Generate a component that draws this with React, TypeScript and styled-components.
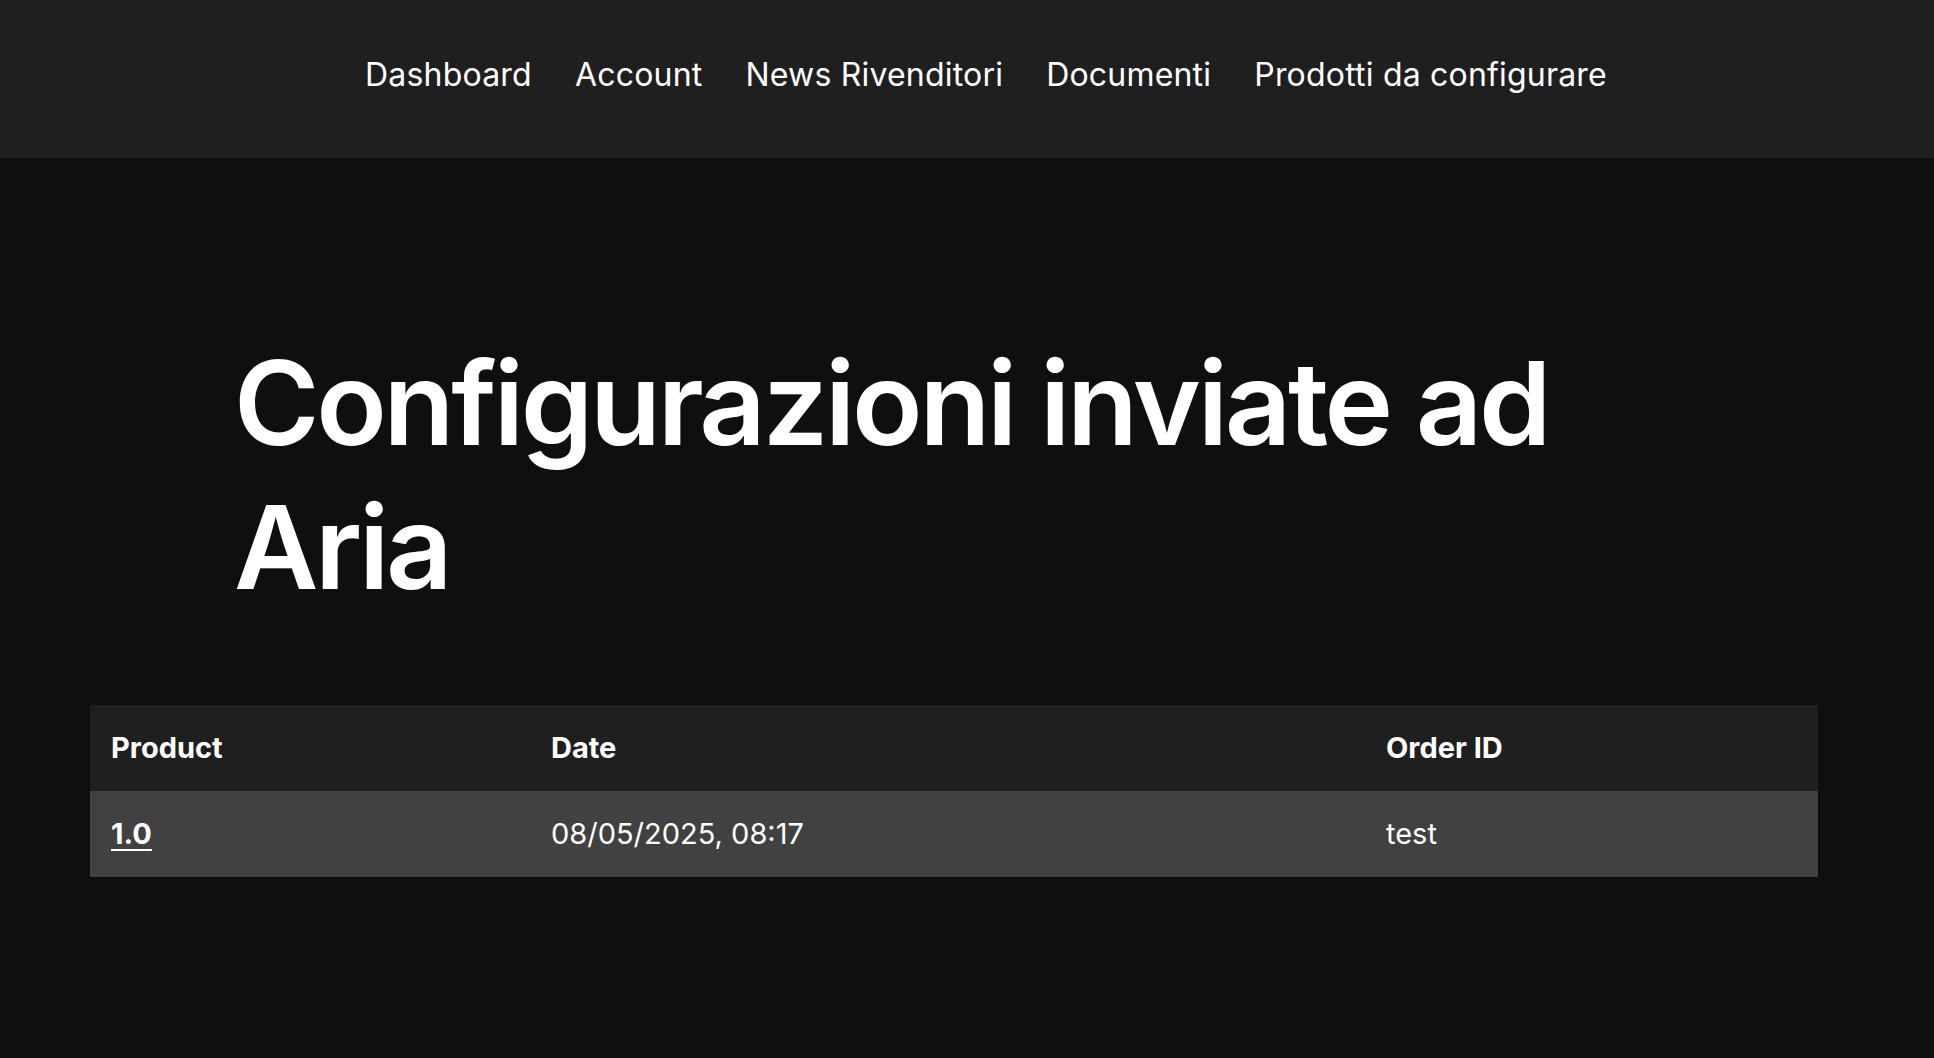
import React from 'react';
import styled, { createGlobalStyle } from 'styled-components';

const GlobalStyle = createGlobalStyle`
  html, body {
    margin: 0;
    padding: 0;
    background: #0f0f11;
    color: #ffffff;
    font-family: Inter, 'Noto Sans', sans-serif;
  }
`;

const Page = styled.div`
  min-height: 100vh;
  background: #0f0f11;
`;

const Header = styled.header`
  height: 158px;
  background: #1f1f1f;
  display: flex;
  align-items: center;
  justify-content: center;
  padding-left: 38px;
  padding-bottom: 10px;
  box-sizing: border-box;
`;

const Nav = styled.nav`
  display: flex;
  gap: 43px;
`;

const NavLink = styled.a`
  color: #ffffff;
  text-decoration: none;
  font-size: 32px;
  font-weight: 400;
  letter-spacing: 0.2px;
  cursor: pointer;
`;

const Main = styled.main`
  padding: 173px 116px 0 90px;
`;

const Title = styled.h1`
  margin: 0 0 86px 144px;
  font-size: 116px;
  line-height: 144px;
  font-weight: 600;
  letter-spacing: -3.3px;
  max-width: 1400px;
`;

const Table = styled.table`
  width: 100%;
  border-collapse: collapse;
  font-size: 29px;
`;

const HeadCell = styled.th<{ $width?: string }>`
  background: #1f1f1f;
  text-align: left;
  font-weight: 700;
  padding: 22px 21px;
  line-height: 42px;
  width: ${(p) => p.$width || 'auto'};
`;

const Row = styled.tr`
  background: #414141;
`;

const Cell = styled.td`
  padding: 22px 21px;
  line-height: 42px;
  font-weight: 400;
`;

const ProductLink = styled.a`
  color: #ffffff;
  font-weight: 700;
  text-decoration: underline;
  text-underline-offset: 5px;
  text-decoration-thickness: 2px;
`;

const links = ['Dashboard', 'Account', 'News Rivenditori', 'Documenti', 'Prodotti da configurare'];

const orders = [{ product: '1.0', date: '08/05/2025, 08:17', orderId: 'test' }];

export default function App() {
  return (
    <Page>
      <GlobalStyle />
      <Header>
        <Nav>
          {links.map((l) => (
            <NavLink key={l}>{l}</NavLink>
          ))}
        </Nav>
      </Header>
      <Main>
        <Title>Configurazioni inviate ad Aria</Title>
        <Table>
          <thead>
            <tr>
              <HeadCell $width='398px'>Product</HeadCell>
              <HeadCell $width='793px'>Date</HeadCell>
              <HeadCell>Order ID</HeadCell>
            </tr>
          </thead>
          <tbody>
            {orders.map((o) => (
              <Row key={o.orderId}>
                <Cell>
                  <ProductLink>{o.product}</ProductLink>
                </Cell>
                <Cell>{o.date}</Cell>
                <Cell>{o.orderId}</Cell>
              </Row>
            ))}
          </tbody>
        </Table>
      </Main>
    </Page>
  );
}
